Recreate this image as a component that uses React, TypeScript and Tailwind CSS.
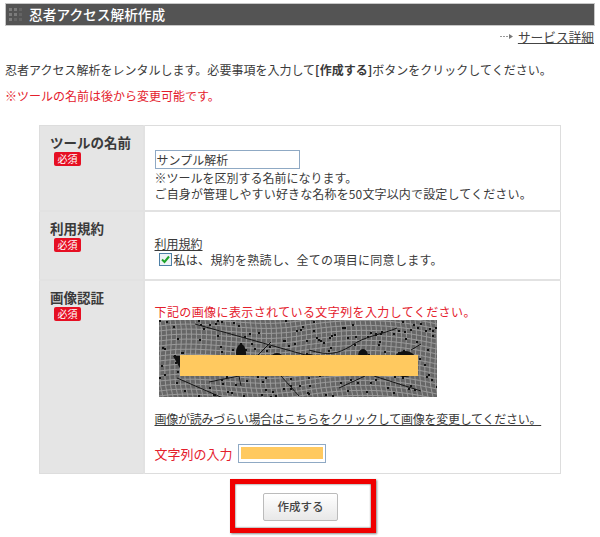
const jp = "font-['Noto_Sans_CJK_JP','Liberation_Sans',sans-serif]";

function Required() {
  return (
    <div className="flex h-[14px] w-[27px] items-center justify-center rounded-[2px] bg-[#e60f23] text-[10px] leading-none text-white">
      必須
    </div>
  );
}

const dots = Array.from({ length: 210 }, (_, i) => ({
  x: (i * 97 + (i * i) % 41) % 278,
  y: (i * 53 + (i * i * 3) % 29) % 77,
}));

function Captcha() {
  const horizontal = Array.from({ length: 17 }, (_, i) => i * 5 + 1);
  const vertical = Array.from({ length: 56 }, (_, i) => i * 5 + 1);
  return (
    <svg width="278" height="77" viewBox="0 0 278 77" className="block">
      <rect width="278" height="77" fill="#666" />
      <g fill="none" stroke="#9a9a9a" strokeWidth="1">
        {horizontal.map((y) => (
          <path key={y} d={`M0 ${y} C 50 ${y - 7}, 90 ${y + 8}, 140 ${y} S 230 ${y - 8}, 278 ${y + 3}`} />
        ))}
        {vertical.map((x) => (
          <path key={x} d={`M${x} 0 C ${x + 5} 20, ${x - 5} 50, ${x + 3} 77`} />
        ))}
      </g>
      <g fill="#111">
        {dots.map((d, i) => (
          <rect key={i} x={d.x} y={d.y} width="2" height="2" />
        ))}
        <ellipse cx="82" cy="33" rx="5" ry="9" />
        <ellipse cx="204" cy="36" rx="5" ry="7" />
        <ellipse cx="246" cy="44" rx="13" ry="13" />
        <ellipse cx="118" cy="38" rx="6" ry="5" />
        <ellipse cx="150" cy="38" rx="7" ry="4" />
        <path d="M14 36 L22 36 L22 50 Z" />
      </g>
      <g fill="none" stroke="#151515" strokeWidth="1">
        <path d="M36 4 L150 36" />
        <path d="M98 36 L112 22" />
        <path d="M150 30 C 170 36, 178 34 192 26 C 205 16, 225 14, 238 8" />
        <path d="M18 58 L64 78" />
        <path d="M122 56 L140 76" />
        <path d="M180 68 L206 56" />
        <path d="M215 56 L262 71" />
        <path d="M50 62 L80 56 L82 66" />
        <path d="M252 30 L262 24" />
      </g>
    </svg>
  );
}

export default function App() {
  return (
    <div className={`${jp} h-[537px] w-[600px] overflow-hidden bg-white pt-[3px] text-[12px] leading-[15px] text-[#3a3a3a]`}>
      <div className="mx-[5px] flex h-[23px] w-[590px] items-center border border-[#c8c8c8] bg-[#545454] pl-[3px]">
        <div className="grid grid-cols-3 gap-[2px]">
          {[0, 1, 2, 3, 4, 5, 6, 7, 8].map((i) => (
            <span key={i} className={`h-[3px] w-[3px] ${i === 2 || i === 5 || i === 7 || i === 8 ? "bg-[#646464]" : "bg-[#7c7c7c]"}`} />
          ))}
        </div>
        <h1 className="ml-[7px] text-[13.7px] font-medium text-white">忍者アクセス解析作成</h1>
      </div>

      <div className="mt-[3px] flex items-center justify-end pr-[6px]">
        <svg width="13" height="7" viewBox="0 0 13 7" className="mr-[5px]">
          <path d="M0 3.5h2M3 3.5h2M6 3.5h2" stroke="#999" />
          <path d="M9 1l4 2.5L9 6z" fill="#777" />
        </svg>
        <a className="text-[12.7px] text-[#444] underline">サービス詳細</a>
      </div>

      <p className="mt-[18px] ml-[5px] whitespace-nowrap tracking-[0.01px]">
        忍者アクセス解析をレンタルします。必要事項を入力して<strong className="font-bold">[作成する]</strong>ボタンをクリックしてください。
      </p>
      <p className="mt-[11px] ml-[5px] text-[#e4202c]">※ツールの名前は後から変更可能です。</p>

      <table className="mt-[22px] ml-[39px] w-[522px] table-fixed border-collapse border border-[#ddd]">
        <tbody>
          <tr className="h-[85px] border-b-2 border-[#e2e2e2]">
            <th className="w-[104px] bg-[#e5e5e5] pt-[9px] pl-[10px] text-left align-top font-normal">
              <div className="mb-[2px] text-[13.5px] font-bold">ツールの名前</div>
              <div className="ml-[4px]"><Required /></div>
            </th>
            <td className="border-l-2 border-[#e2e2e2] pt-[24px] pl-[10px] align-top">
              <div className="flex h-[19px] w-[145px] items-center border border-[#8fa9c4] pl-[1px] text-[12px]">サンプル解析</div>
              <div className="mt-[1px] whitespace-nowrap">※ツールを区別する名前になります。</div>
              <div className="mt-[1px] whitespace-nowrap tracking-[0.15px]">ご自身が管理しやすい好きな名称を50文字以内で設定してください。</div>
            </td>
          </tr>
          <tr className="h-[69px] border-b-2 border-[#e2e2e2]">
            <th className="bg-[#e5e5e5] pt-[9px] pl-[10px] text-left align-top font-normal">
              <div className="mb-[2px] text-[13.5px] font-bold">利用規約</div>
              <div className="ml-[4px]"><Required /></div>
            </th>
            <td className="border-l-2 border-[#e2e2e2] pt-[24px] pl-[10px] align-top">
              <a className="block underline">利用規約</a>
              <div className="mt-[1px] flex items-center whitespace-nowrap tracking-[0.3px]">
                <span className="mr-[2px] ml-[4px] flex h-[13px] w-[13px] items-center justify-center border border-[#4d7fa6] bg-[#eef3f7]">
                  <svg width="9" height="9" viewBox="0 0 9 9">
                    <path d="M1 4.5L3.5 7L8 1.5" fill="none" stroke="#1ea32a" strokeWidth="2" />
                  </svg>
                </span>
                私は、規約を熟読し、全ての項目に同意します。
              </div>
            </td>
          </tr>
          <tr className="h-[194px]">
            <th className="bg-[#e5e5e5] pt-[9px] pl-[10px] text-left align-top font-normal">
              <div className="mb-[2px] text-[13.5px] font-bold">画像認証</div>
              <div className="ml-[4px]"><Required /></div>
            </th>
            <td className="border-l-2 border-[#e2e2e2] pt-[23px] pl-[10px] align-top">
              <div className="whitespace-nowrap tracking-[0.4px] text-[#e4202c]">下記の画像に表示されている文字列を入力してください。</div>
              <div className="relative mt-[1px] ml-[4px] w-[278px]">
                <Captcha />
                <div className="absolute top-[35px] left-[21px] h-[21px] w-[238px] bg-[#ffc95f]" />
              </div>
              <a className="mt-[14px] block whitespace-nowrap tracking-[-0.25px] underline">画像が読みづらい場合はこちらをクリックして画像を変更してください。</a>
              <div className="mt-[18px] flex items-center text-[13px] text-[#e4202c]">
                文字列の入力
                <span className="ml-[5px] flex h-[19px] w-[88px] items-center justify-center border border-[#8fa9c4]">
                  <span className="h-[12px] w-[82px] bg-[#ffc95f]" />
                </span>
              </div>
            </td>
          </tr>
        </tbody>
      </table>

      <div className="mt-[5px] ml-[230px] flex h-[54px] w-[146px] items-center justify-center border-[5px] border-[#f00000] pt-[1px] pr-[5px] shadow-[inset_0_0_2px_#333,1px_1px_2px_#888]">
        <button className="h-[28px] w-[75px] rounded-[2px] border border-[#bbb] bg-gradient-to-b from-white to-[#e8e8e8] text-[11.5px] font-medium text-[#444]">
          作成する
        </button>
      </div>
    </div>
  );
}
